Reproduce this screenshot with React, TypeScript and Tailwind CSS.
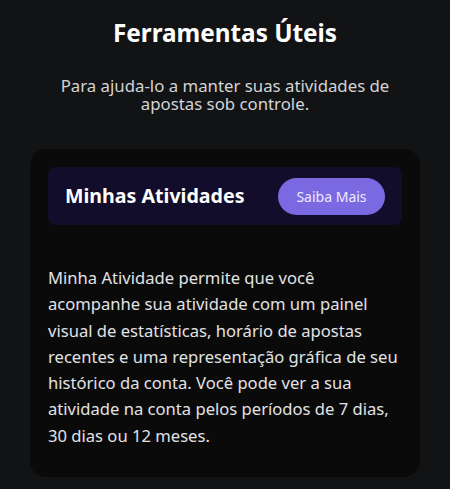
const lines = [
  "Minha Atividade permite que você",
  "acompanhe sua atividade com um painel",
  "visual de estatísticas, horário de apostas",
  "recentes e uma representação gráfica de seu",
  "histórico da conta. Você pode ver a sua",
  "atividade na conta pelos períodos de 7 dias,",
  "30 dias ou 12 meses.",
];

export default function App() {
  return (
    <div
      className="min-h-[489px] w-full bg-[#121315] px-[30px] pt-[15px] pb-[14px] text-white"
      style={{ fontFamily: '"Noto Sans", Lato, sans-serif' }}
    >
      <h1 className="text-center text-[24.3px] font-bold leading-[36px] text-white">
        Ferramentas Úteis
      </h1>
      <p className="mt-[26px] text-center text-[16.8px] leading-[18px] text-[#d4d4d6]">
        Para ajuda-lo a manter suas atividades de
        <br />
        apostas sob controle.
      </p>
      <div className="mt-[36px] rounded-[16px] bg-[#0a0a0b] px-[18px] pt-[18px] pb-[28px]">
        <div className="flex h-[58px] items-center justify-between rounded-[8px] bg-[#120d2b] pl-[17px] pr-[17px]">
          <span className="text-[19.6px] font-bold text-white">Minhas Atividades</span>
          <button className="h-[37px] w-[107px] rounded-full bg-[#7b69e1] text-[14px] text-[#eeeaff]">
            Saiba Mais
          </button>
        </div>
        <p className="mt-[40px] whitespace-nowrap text-[16.6px] leading-[26.3px] text-[#e2e2e4]">
          {lines.map((line, i) => (
            <span key={i} className="block">
              {line}
            </span>
          ))}
        </p>
      </div>
    </div>
  );
}
